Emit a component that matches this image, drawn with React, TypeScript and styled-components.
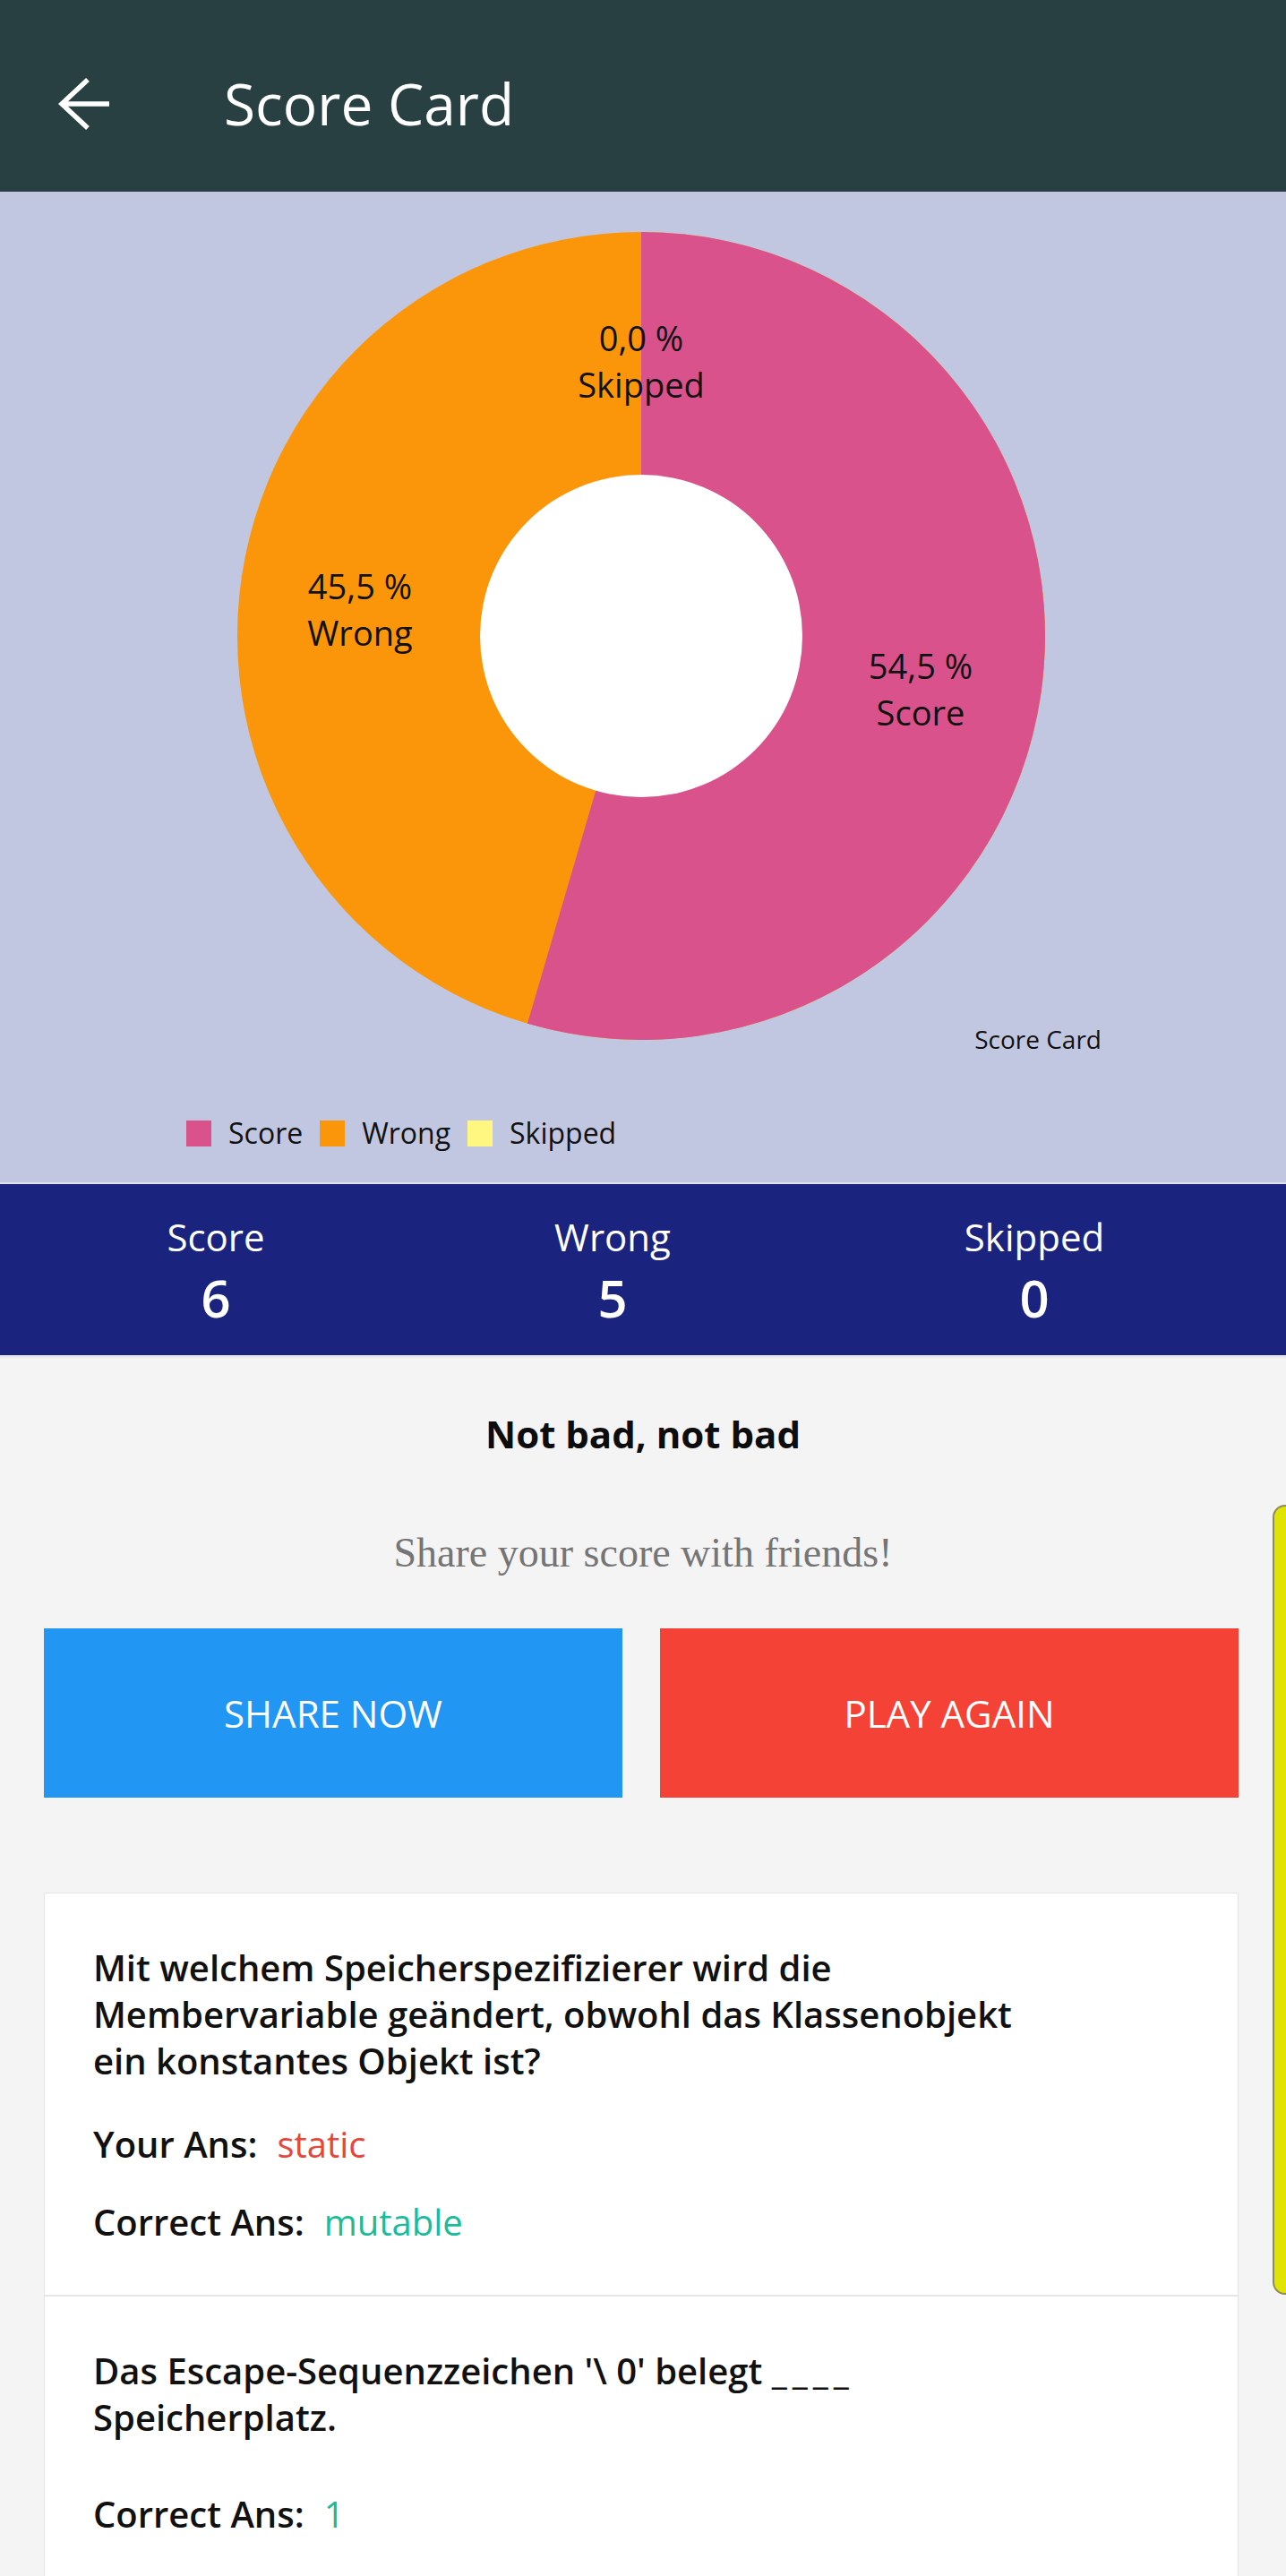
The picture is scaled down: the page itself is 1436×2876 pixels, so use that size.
import React from "react";
import styled, { createGlobalStyle } from "styled-components";

const GlobalStyle = createGlobalStyle`
  html, body {
    margin: 0;
    padding: 0;
    background: #f5f4f5;
  }
  body {
    font-family: "Open Sans", "Noto Sans", sans-serif;
    -webkit-font-smoothing: antialiased;
  }
`;

const Page = styled.div`
  position: relative;
  width: 1436px;
  height: 2876px;
  overflow: hidden;
  background: #f5f4f5;
`;

const Header = styled.header`
  height: 214px;
  box-sizing: border-box;
  padding: 18px 0 0 64px;
  display: flex;
  align-items: center;
  background: #284041;
`;

const BackButton = styled.button`
  width: 60px;
  height: 60px;
  padding: 0;
  border: 0;
  background: transparent;
  display: flex;
  align-items: center;
  justify-content: center;
  cursor: pointer;
`;

const Title = styled.h1`
  margin: 0 0 0 126px;
  font-family: "Open Sans", "Noto Sans", sans-serif;
  font-weight: 400;
  font-size: 64px;
  line-height: 80px;
  color: #ffffff;
`;

const ChartSection = styled.section`
  height: 1106px;
  display: flex;
  flex-direction: column;
  background: #c1c7e0;
  border-bottom: 2px solid #dfe2ef;
`;

const PieSvg = styled.svg`
  display: block;
  width: 1436px;
  height: 980px;
  flex: none;
`;

const Legend = styled.div`
  display: flex;
  align-items: center;
  gap: 19px;
  padding: 56px 0 0 208px;
`;

const LegendItem = styled.div`
  display: flex;
  align-items: center;
  gap: 19px;
  font-family: "Open Sans", "Noto Sans", sans-serif;
  font-size: 32px;
  line-height: 30px;
  color: #111111;
`;

const Swatch = styled.span<{ $color: string }>`
  width: 28px;
  height: 29px;
  background: ${(p) => p.$color};
`;

const StatsBar = styled.section`
  display: grid;
  grid-template-columns: 482px 404px 538px;
  padding: 34px 0 34px;
  background: #1a237e;
  border-bottom: 3px solid #e8e8f2;
`;

const Stat = styled.div`
  display: flex;
  flex-direction: column;
  align-items: center;
  color: #ffffff;
`;

const StatLabel = styled.span`
  font-size: 42px;
  line-height: 50px;
  font-weight: 400;
`;

const StatValue = styled.span`
  margin-top: 13px;
  font-size: 58px;
  line-height: 60px;
  font-weight: 600;
`;

const Verdict = styled.h2`
  margin: 57px 0 0;
  text-align: center;
  font-size: 42px;
  line-height: 56px;
  font-weight: 700;
  color: #0d0d0d;
`;

const ShareHint = styled.p`
  margin: 77px 0 0;
  text-align: center;
  font-family: "Liberation Serif", "Times New Roman", serif;
  font-size: 46px;
  line-height: 56px;
  color: #757575;
`;

const ButtonRow = styled.div`
  display: grid;
  grid-template-columns: 1fr 1fr;
  gap: 42px;
  margin-top: 56px;
  padding: 0 53px 0 49px;
`;

const ActionButton = styled.button<{ $bg: string }>`
  height: 189px;
  border: 0;
  border-radius: 0;
  background: ${(p) => p.$bg};
  color: #ffffff;
  font-family: "Open Sans", "Noto Sans", sans-serif;
  font-size: 42px;
  font-weight: 400;
  letter-spacing: 0;
  cursor: pointer;
`;

const AnswerCard = styled.section`
  margin: 106px 53px 0 49px;
  background: #ffffff;
  border: 1px solid #e4e4e4;
`;

const QuestionItem = styled.article`
  padding: 57px 54px 55px;
  & + & {
    border-top: 2px solid #e6e6e6;
  }
`;

const Question = styled.p`
  margin: 0;
  font-size: 40px;
  line-height: 52px;
  font-weight: 600;
  color: #111111;
`;

const Blank = styled.span`
  letter-spacing: 6px;
`;

const AnswerRow = styled.div<{ $gap: number }>`
  display: flex;
  align-items: baseline;
  margin-top: ${(p) => p.$gap}px;
  font-size: 40px;
  line-height: 52px;
`;

const AnswerLabel = styled.span`
  font-weight: 600;
  color: #111111;
`;

const AnswerValue = styled.span<{ $color: string }>`
  margin-left: 22px;
  font-weight: 400;
  color: ${(p) => p.$color};
`;

const EdgeHandle = styled.div`
  position: absolute;
  top: 1680px;
  right: -4px;
  width: 15px;
  height: 878px;
  background: #e1e300;
  border: 2px solid #8d8e55;
  border-radius: 14px 0 0 14px;
`;

const CX = 716;
const CY = 496;
const R = 451;
const RH = 180;

const polar = (r: number, deg: number): [number, number] => {
  const a = (deg * Math.PI) / 180;
  return [CX + r * Math.sin(a), CY - r * Math.cos(a)];
};

const sectorPath = (start: number, end: number) => {
  const [x1, y1] = polar(R, start);
  const [x2, y2] = polar(R, end);
  const large = end - start > 180 ? 1 : 0;
  return `M ${CX} ${CY} L ${x1} ${y1} A ${R} ${R} 0 ${large} 1 ${x2} ${y2} Z`;
};

const BackArrow = () => (
  <svg width="60" height="60" viewBox="0 0 60 60" fill="none">
    <path d="M4 30 H58" stroke="#ffffff" strokeWidth="5.5" />
    <path d="M34 3 L5 30 L34 57" stroke="#ffffff" strokeWidth="5.5" strokeLinejoin="miter" />
  </svg>
);

const score = 6;
const wrong = 5;
const skipped = 0;
const total = score + wrong + skipped;
const scoreDeg = (score / total) * 360;

const labelStyle = {
  fontFamily: '"Open Sans", "Noto Sans", sans-serif',
  fontSize: 38,
  fill: "#111111",
};

const ScoreChart = () => (
  <PieSvg viewBox="0 0 1436 980">
    <circle cx={CX} cy={CY} r={R} fill="#fb960b" />
    <path d={sectorPath(0, scoreDeg)} fill="#d9528b" />
    <circle cx={CX} cy={CY} r={RH} fill="#ffffff" />
    <g style={labelStyle} textAnchor="middle">
      <text x={716} y={178}>0,0 %</text>
      <text x={716} y={230}>Skipped</text>
      <text x={402} y={455}>45,5 %</text>
      <text x={402} y={507}>Wrong</text>
      <text x={1028} y={544}>54,5 %</text>
      <text x={1028} y={596}>Score</text>
    </g>
    <text
      x={1230}
      y={957}
      textAnchor="end"
      style={{ fontFamily: '"Open Sans", "Noto Sans", sans-serif', fontSize: 28, fill: "#111111" }}
    >
      Score Card
    </text>
  </PieSvg>
);

export default function App() {
  return (
    <>
      <GlobalStyle />
      <Page>
        <Header>
          <BackButton aria-label="Back">
            <BackArrow />
          </BackButton>
          <Title>Score Card</Title>
        </Header>

        <ChartSection>
          <ScoreChart />
          <Legend>
            <LegendItem>
              <Swatch $color="#d9528b" />
              Score
            </LegendItem>
            <LegendItem>
              <Swatch $color="#fb960b" />
              Wrong
            </LegendItem>
            <LegendItem>
              <Swatch $color="#fff780" />
              Skipped
            </LegendItem>
          </Legend>
        </ChartSection>

        <StatsBar>
          <Stat>
            <StatLabel>Score</StatLabel>
            <StatValue>{score}</StatValue>
          </Stat>
          <Stat>
            <StatLabel>Wrong</StatLabel>
            <StatValue>{wrong}</StatValue>
          </Stat>
          <Stat>
            <StatLabel>Skipped</StatLabel>
            <StatValue>{skipped}</StatValue>
          </Stat>
        </StatsBar>

        <Verdict>Not bad, not bad</Verdict>
        <ShareHint>Share your score with friends!</ShareHint>

        <ButtonRow>
          <ActionButton $bg="#2196f3">SHARE NOW</ActionButton>
          <ActionButton $bg="#f44336">PLAY AGAIN</ActionButton>
        </ButtonRow>

        <AnswerCard>
          <QuestionItem>
            <Question>
              Mit welchem Speicherspezifizierer wird die
              <br />
              Membervariable geändert, obwohl das Klassenobjekt
              <br />
              ein konstantes Objekt ist?
            </Question>
            <AnswerRow $gap={41}>
              <AnswerLabel>Your Ans:</AnswerLabel>
              <AnswerValue $color="#e5473c">static</AnswerValue>
            </AnswerRow>
            <AnswerRow $gap={35}>
              <AnswerLabel>Correct Ans:</AnswerLabel>
              <AnswerValue $color="#1abc9c">mutable</AnswerValue>
            </AnswerRow>
          </QuestionItem>
          <QuestionItem>
            <Question>
              Das Escape-Sequenzzeichen '\ 0' belegt <Blank>____</Blank>
              <br />
              Speicherplatz.
            </Question>
            <AnswerRow $gap={56}>
              <AnswerLabel>Correct Ans:</AnswerLabel>
              <AnswerValue $color="#1abc9c">1</AnswerValue>
            </AnswerRow>
          </QuestionItem>
        </AnswerCard>

        <EdgeHandle />
      </Page>
    </>
  );
}
